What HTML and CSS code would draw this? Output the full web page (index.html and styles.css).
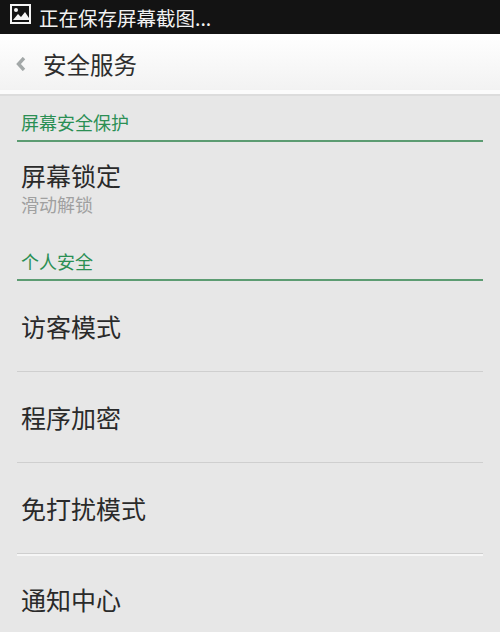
FILE: index.html
```html
<!DOCTYPE html>
<html lang="zh">
<head>
<meta charset="utf-8">
<title>安全服务</title>
<link rel="stylesheet" href="styles.css">
</head>
<body>
<div class="status">
  <svg class="pic" viewBox="0 0 21 20" width="21" height="20"><path fill="#f4f4f4" fill-rule="evenodd" d="M0 0h21v20H0zM2 2v16h17V2z"/><circle cx="6" cy="6" r="2" fill="#f4f4f4"/><path fill="#f4f4f4" d="M3 16l5-6 3 3 4-5 4 6v2H3z"/></svg>
  <span class="status-text">正在保存屏幕截图...</span>
</div>
<header class="bar">
  <svg class="back" viewBox="0 0 10 14" width="10" height="14"><path d="M8 1 2.5 7 8 13" fill="none" stroke="#a3a8a8" stroke-width="3.4"/></svg>
  <h1 class="title">安全服务</h1>
</header>
<main>
  <h2 class="sec sec-one">屏幕安全保护</h2>
  <div class="row-lock">
    <div class="name">屏幕锁定</div>
    <div class="sub">滑动解锁</div>
  </div>
  <h2 class="sec">个人安全</h2>
  <div class="row">访客模式</div>
  <div class="row">程序加密</div>
  <div class="row lit">免打扰模式</div>
  <div class="row last">通知中心</div>
</main>
</body>
</html>
```
FILE: styles.css
```css
* { box-sizing: border-box; }
html, body { margin: 0; padding: 0; }
body {
  width: 500px;
  height: 632px;
  overflow: hidden;
  background: #e7e7e7;
  font-family: "Noto Sans CJK SC", "Liberation Sans", sans-serif;
  color: #2a2a2a;
}
.status {
  height: 34px;
  background: #131313;
  display: flex;
  align-items: flex-start;
  padding: 4px 0 0 10px;
  color: #f2f2f2;
}
.pic { display: block; }
.status-text { font-size: 19.5px; line-height: 27px; margin-left: 8px; }
.bar {
  height: 62px;
  background: linear-gradient(#ffffff, #f2f2f2 94%, #fbfbfb 94%, #fbfbfb);
  border-bottom: 2px solid #dcdcdc;
  display: flex;
  align-items: center;
  padding-left: 16px;
}
.title { margin: 0 0 0 17px; font-size: 23.5px; font-weight: 400; line-height: 30px; color: #2e2e2e; }
.back { display: block; }
.sec {
  margin: 0 17px;
  padding-left: 4px;
  height: 33px;
  font-size: 18px;
  font-weight: 400;
  line-height: 26px;
  color: #2b8f54;
  border-bottom: 2px solid #5c9c72;
}
.sec-one { height: 46px; padding-top: 13px; }
.row-lock { margin: 0 17px; padding: 17px 4px 0; height: 106px; }
.name { font-size: 25px; line-height: 32px; }
.sub { font-size: 18px; line-height: 26px; color: #a0a0a0; }
.row {
  margin: 0 17px;
  padding-left: 4px;
  height: 91px;
  font-size: 25px;
  line-height: 90px;
  border-bottom: 1px solid #cfcfcf;
}
.lit { box-shadow: 0 2px 0 #f6f6f6; }
.last { border-bottom: 0; box-shadow: none; }
```
